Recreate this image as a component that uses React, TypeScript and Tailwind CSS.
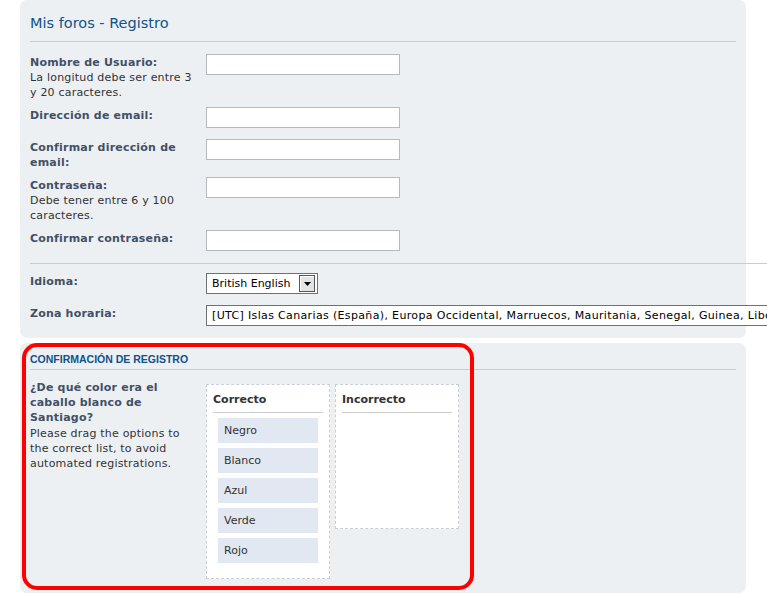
const verdana = { fontFamily: '"DejaVu Sans", Verdana, sans-serif' }

type FieldProps = {
  label: string
  explain?: string
  children: React.ReactNode
}

const Field = ({ label, explain, children }: FieldProps) => (
  <div className="mt-[8px] flex first:mt-0">
    <div className="relative top-[1px] w-[176px] shrink-0 pr-[10px] text-[11px] leading-[15px] tracking-[0.2px]">
      <div className="font-bold text-[#425067]">{label}</div>
      {explain && <div className="text-[#333333]">{explain}</div>}
    </div>
    <div className="min-h-[24px]">{children}</div>
  </div>
)

const TextInput = () => (
  <div className="h-[21px] w-[194px] border border-[#b4bac0] bg-white" />
)

const options = ["Negro", "Blanco", "Azul", "Verde", "Rojo"]

export default function App() {
  return (
    <div
      className="h-[595px] w-full overflow-hidden bg-white text-[#333333]"
      style={verdana}
    >
      <div className="ml-[20px] w-[726px]">
        {/* registration panel */}
        <div className="rounded-[7px] bg-[#ecf0f3] px-[10px] pb-[9px]">
          <h2 className="pt-[13px] pb-[8px] text-[14.5px] leading-[20px] text-[#105289]">
            Mis foros - Registro
          </h2>
          <div className="border-t border-[#cccccc] pt-[12px]">
            <Field
              label="Nombre de Usuario:"
              explain="La longitud debe ser entre 3 y 20 caracteres."
            >
              <TextInput />
            </Field>
            <Field label="Dirección de email:">
              <TextInput />
            </Field>
            <Field label="Confirmar dirección de email:">
              <TextInput />
            </Field>
            <Field
              label="Contraseña:"
              explain="Debe tener entre 6 y 100 caracteres."
            >
              <TextInput />
            </Field>
            <Field label="Confirmar contraseña:">
              <TextInput />
            </Field>
          </div>
          <div className="mt-[9px] w-[900px] border-t border-[#cccccc] pt-[9px]">
            <Field label="Idioma:">
              <div className="flex h-[21px] w-[112px] items-center border border-[#707070] bg-white pl-[5px] pr-[2px] text-[11px]">
                <span className="flex-1 whitespace-nowrap pt-[2px] text-black">
                  British English
                </span>
                <span className="flex h-[17px] w-[16px] items-center justify-center border border-[#555555] bg-[#e4e4e4] shadow-[inset_1px_1px_0_#ffffff]">
                  <svg width="7" height="4" viewBox="0 0 7 4">
                    <path d="M0 0h7L3.5 4z" fill="#000000" />
                  </svg>
                </span>
              </div>
            </Field>
            <Field label="Zona horaria:">
              <div className="flex h-[21px] items-center whitespace-nowrap border border-[#707070] bg-white pl-[5px] pr-[30px] pt-[2px] text-[11px] tracking-[0.35px] text-black">
                [UTC] Islas Canarias (España), Europa Occidental, Marruecos,
                Mauritania, Senegal, Guinea, Liberia
              </div>
            </Field>
          </div>
        </div>

        {/* confirmation panel */}
        <div className="relative mt-[5px] h-[250px] rounded-[7px] bg-[#ecf0f3] px-[10px]">
          <h3
            className="pt-[10px] pb-[3px] text-[10.5px] font-bold uppercase leading-[13px] text-[#105289]"
            style={{ fontFamily: '"Liberation Sans", Arial, sans-serif' }}
          >
            Confirmación de registro
          </h3>
          <div className="border-t border-[#cccccc] pt-[9px]">
            <div className="flex">
              <div className="relative top-[1px] w-[176px] shrink-0 pr-[10px] text-[11px] leading-[15.2px] tracking-[0.2px]">
                <div className="font-bold text-[#425067]">
                  ¿De qué color era el caballo blanco de Santiago?
                </div>
                <div className="text-[#333333]">
                  Please drag the options to the correct list, to avoid
                  automated registrations.
                </div>
              </div>
              <div className="mt-[5px] flex items-start gap-[5px]">
                <div className="w-[124px] border border-dashed border-[#c8ced6] bg-white px-[6px] pt-[7px] pb-[15px]">
                  <div className="border-b border-[#cccccc] pb-[5px] pt-[1px] text-[11px] font-bold leading-[14px] text-[#333333]">
                    Correcto
                  </div>
                  <div className="mt-[5px] flex flex-col gap-[5px] px-[5px]">
                    {options.map((option) => (
                      <div
                        key={option}
                        className="flex h-[25px] items-center bg-[#e1e8f2] pl-[6px] pt-[2px] text-[11px] text-[#333333]"
                      >
                        {option}
                      </div>
                    ))}
                  </div>
                </div>
                <div className="h-[145px] w-[124px] border border-dashed border-[#c8ced6] bg-white px-[6px] pt-[7px]">
                  <div className="border-b border-[#cccccc] pb-[5px] pt-[1px] text-[11px] font-bold leading-[14px] text-[#333333]">
                    Incorrecto
                  </div>
                </div>
              </div>
            </div>
          </div>
          {/* red highlight around the captcha */}
          <div className="pointer-events-none absolute left-[2px] top-0 h-[247px] w-[452px] rounded-[15px] border-[4px] border-[#ff0000]" />
        </div>
      </div>
    </div>
  )
}
